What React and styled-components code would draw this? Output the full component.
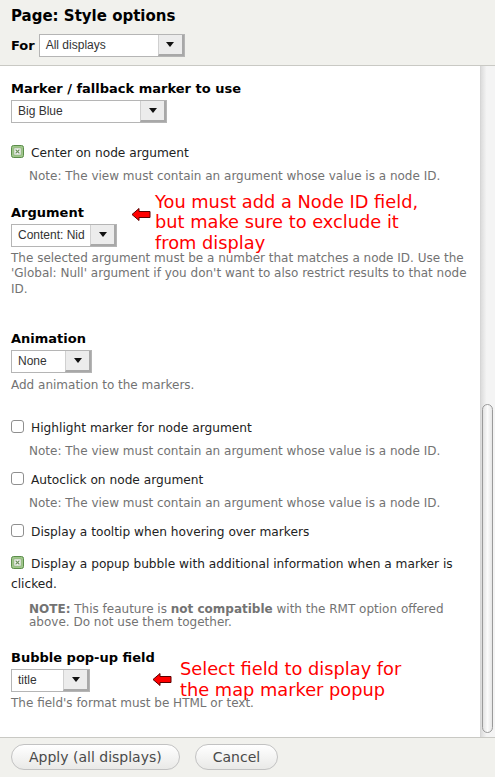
import React from 'react';
import styled, { createGlobalStyle } from 'styled-components';

const GlobalStyle = createGlobalStyle`
  html, body {
    margin: 0;
    padding: 0;
    background: #fff;
  }
  body {
    font-family: "DejaVu Sans", Verdana, sans-serif;
  }
`;

const Root = styled.div`
  width: 495px;
  height: 777px;
  display: flex;
  flex-direction: column;
  overflow: hidden;
`;

const Header = styled.div`
  height: 66px;
  box-sizing: border-box;
  padding: 6px 11px 0;
  background-color: #f1f1ed;
  border-bottom: 1px solid #c9c9c4;
`;

const Title = styled.h1`
  margin: 0;
  font-size: 15px;
  line-height: 20px;
  font-weight: bold;
  color: #000;
`;

const ForRow = styled.div`
  display: flex;
  align-items: center;
  gap: 4px;
  margin-top: 8px;
`;

const ForLabel = styled.span`
  font-size: 13px;
  font-weight: bold;
  color: #000;
`;

const Body = styled.div`
  flex: 1;
  display: flex;
  min-height: 0;
`;

const Content = styled.div`
  flex: 1;
  padding: 15px 10px 0 11px;
`;

const Track = styled.div`
  width: 15px;
  display: flex;
  flex-direction: column;
  background: linear-gradient(to right, #dcdcdc, #f4f4f4 40%, #f4f4f4);
  border-left: 1px solid #d6d6d6;
  padding: 338px 0 4px;
  box-sizing: border-box;
`;

const Thumb = styled.div`
  flex: 1;
  margin: 0 2px 0 1px;
  border: 1px solid #9a9a9a;
  border-radius: 6px;
  background: linear-gradient(to right, #e2e2e2, #fbfbfb 50%, #e6e6e6);
`;

const Footer = styled.div`
  height: 40px;
  box-sizing: border-box;
  background-color: #f1f1ed;
  border-top: 1px solid #c9c9c4;
  display: flex;
  align-items: center;
  gap: 15px;
  padding: 0 11px 2px;
`;

const Button = styled.button`
  height: 26px;
  padding: 0 17px;
  border: 1px solid #c2c2c2;
  border-radius: 13px;
  background: linear-gradient(to bottom, #ffffff, #e9e9e7);
  font-family: "DejaVu Sans", sans-serif;
  font-size: 14px;
  color: #4a4a4a;
`;

const Item = styled.div`
  margin-top: ${p => p.$top || 0}px;
  position: relative;
`;

const Label = styled.div`
  font-size: 13px;
  font-weight: bold;
  line-height: 16px;
  color: #000;
  margin-bottom: 3px;
`;

const Desc = styled.div`
  font-size: 12px;
  line-height: 15.5px;
  color: #737373;
  margin-top: ${p => p.$top || 5}px;
  padding-left: ${p => p.$indent || 0}px;
`;

const Note = styled.div`
  font-size: 12px;
  line-height: 13.4px;
  color: #737373;
  margin-top: 9px;
  padding-left: 18px;
  b {
    font-weight: bold;
  }
`;

const CheckRow = styled.div`
  font-size: 12.2px;
  line-height: 20px;
  color: #222;
`;

const Box = styled.span`
  display: inline-block;
  vertical-align: -1px;
  width: 13px;
  height: 13px;
  margin-right: 7px;
`;

const SelectBox = styled.div`
  display: flex;
  width: ${p => p.$w}px;
  height: 23px;
  box-sizing: border-box;
  border: 1px solid #b5b5b5;
  background: #fff;
`;

const SelectText = styled.div`
  flex: 1;
  padding-left: 6px;
  font-family: "Liberation Sans", Arial, sans-serif;
  font-size: 12px;
  line-height: 21px;
  color: #333;
  white-space: nowrap;
  overflow: hidden;
`;

const SelectBtn = styled.div`
  width: 26px;
  display: flex;
  align-items: center;
  justify-content: center;
  background: #ececec;
  border-left: 1px solid #d0d0d0;
  border-right: 2px solid #a8a8a8;
  border-bottom: 2px solid #a8a8a8;
  box-sizing: border-box;
`;

const Annotation = styled.div`
  position: absolute;
  left: ${p => p.$left}px;
  top: ${p => p.$top}px;
  display: flex;
  align-items: flex-start;
  gap: ${p => p.$gap || 4}px;
`;

const RedText = styled.div`
  font-size: 17.8px;
  line-height: 20.5px;
  color: #ff0000;
  white-space: nowrap;
`;

const ArrowWrap = styled.div`
  margin-top: ${p => p.$top}px;
`;

function Select({ value, width }) {
  return (
    <SelectBox $w={width}>
      <SelectText>{value}</SelectText>
      <SelectBtn>
        <svg width="8" height="5" viewBox="0 0 8 5">
          <path d="M0 0 L8 0 L4 5 Z" fill="#111" />
        </svg>
      </SelectBtn>
    </SelectBox>
  );
}

function Checkbox({ checked }) {
  return (
    <Box>
      {checked ? (
        <svg width="13" height="13" viewBox="0 0 13 13">
          <rect x="0.5" y="0.5" width="12" height="12" rx="2" fill="#9fc78a" stroke="#5b8c4a" />
          <rect x="3" y="3" width="7" height="7" fill="#f4f4f4" stroke="#8aa87c" strokeWidth="0.6" />
          <path d="M4.6 4.6 L8.4 8.4 M8.4 4.6 L4.6 8.4" stroke="#6b8f5a" strokeWidth="1.2" />
        </svg>
      ) : (
        <svg width="13" height="13" viewBox="0 0 13 13">
          <rect x="0.5" y="0.5" width="12" height="12" rx="2.5" fill="#fff" stroke="#8f8f8f" />
        </svg>
      )}
    </Box>
  );
}

function RedArrow() {
  return (
    <svg width="20" height="15" viewBox="0 0 20 15">
      <path d="M1 7.5 L8 1.5 L8 4.5 L19 4.5 L19 10.5 L8 10.5 L8 13.5 Z" fill="#ff0000" stroke="#5a0000" strokeWidth="1" strokeLinejoin="round" />
    </svg>
  );
}

export default function App() {
  return (
    <Root>
      <GlobalStyle />
      <Header>
        <Title>Page: Style options</Title>
        <ForRow>
          <ForLabel>For</ForLabel>
          <Select value="All displays" width={146} />
        </ForRow>
      </Header>
      <Body>
        <Content>
          <Item>
            <Label>Marker / fallback marker to use</Label>
            <Select value="Big Blue" width={156} />
          </Item>
          <Item $top={20}>
            <CheckRow><Checkbox checked />Center on node argument</CheckRow>
            <Desc $top={6} $indent={18}>Note: The view must contain an argument whose value is a node ID.</Desc>
          </Item>
          <Item $top={20}>
            <Label>Argument</Label>
            <Select value="Content: Nid" width={106} />
            <Desc $top={4}>The selected argument must be a number that matches a node ID. Use the 'Global: Null' argument if you don't want to also restrict results to that node ID.</Desc>
            <Annotation $left={120} $top={-13}>
              <ArrowWrap $top={15}><RedArrow /></ArrowWrap>
              <RedText>You must add a Node ID field,<br />but make sure to exclude it<br />from display</RedText>
            </Annotation>
          </Item>
          <Item $top={34}>
            <Label>Animation</Label>
            <Select value="None" width={81} />
            <Desc $top={5}>Add animation to the markers.</Desc>
          </Item>
          <Item $top={24}>
            <CheckRow><Checkbox />Highlight marker for node argument</CheckRow>
            <Desc $top={6} $indent={18}>Note: The view must contain an argument whose value is a node ID.</Desc>
          </Item>
          <Item $top={11}>
            <CheckRow><Checkbox />Autoclick on node argument</CheckRow>
            <Desc $top={6} $indent={18}>Note: The view must contain an argument whose value is a node ID.</Desc>
          </Item>
          <Item $top={10}>
            <CheckRow><Checkbox />Display a tooltip when hovering over markers</CheckRow>
          </Item>
          <Item $top={12}>
            <CheckRow><Checkbox checked />Display a popup bubble with additional information when a marker is clicked.</CheckRow>
            <Note><b>NOTE:</b> This feauture is <b>not compatible</b> with the RMT option offered above. Do not use them together.</Note>
          </Item>
          <Item $top={21}>
            <Label>Bubble pop-up field</Label>
            <Select value="title" width={79} />
            <Desc $top={4}>The field's format must be HTML or text.</Desc>
            <Annotation $left={141} $top={9} $gap={8}>
              <ArrowWrap $top={13}><RedArrow /></ArrowWrap>
              <RedText>Select field to display for<br />the map marker popup</RedText>
            </Annotation>
          </Item>
        </Content>
        <Track>
          <Thumb />
        </Track>
      </Body>
      <Footer>
        <Button>Apply (all displays)</Button>
        <Button>Cancel</Button>
      </Footer>
    </Root>
  );
}
